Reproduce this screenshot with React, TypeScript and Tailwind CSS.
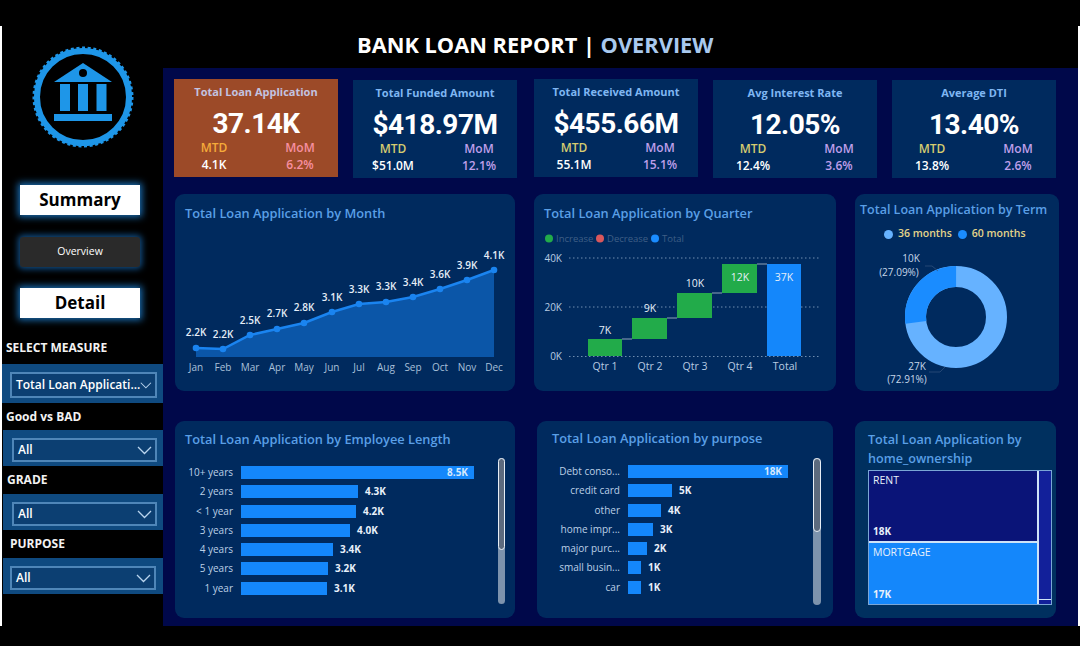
import React from "react";

const kpis = [
  { title: "Total Loan Application", value: "37.14K", mtd: "4.1K", mom: "6.2%", cls: "mt-0 ml-0 bg-[#9c4a28]", titleCls: "text-[#c3c3e0]", mtdCls: "text-[#f5aa3a]", momCls: "text-[#f78fa0]" },
  { title: "Total Funded Amount", value: "$418.97M", mtd: "$51.0M", mom: "12.1%", cls: "mt-[1px] ml-[15px] bg-[#002a5e]", titleCls: "text-[#7fb6f2]", mtdCls: "text-[#d6cc70]", momCls: "text-[#bf9fea]" },
  { title: "Total Received Amount", value: "$455.66M", mtd: "55.1M", mom: "15.1%", cls: "mt-0 ml-[17px] bg-[#002a5e]", titleCls: "text-[#7fb6f2]", mtdCls: "text-[#d6cc70]", momCls: "text-[#bf9fea]" },
  { title: "Avg Interest Rate", value: "12.05%", mtd: "12.4%", mom: "3.6%", cls: "mt-[1px] ml-[15px] bg-[#002a5e]", titleCls: "text-[#7fb6f2]", mtdCls: "text-[#d6cc70]", momCls: "text-[#bf9fea]" },
  { title: "Average DTI", value: "13.40%", mtd: "13.8%", mom: "2.6%", cls: "mt-[1px] ml-[15px] bg-[#002a5e]", titleCls: "text-[#7fb6f2]", mtdCls: "text-[#d6cc70]", momCls: "text-[#bf9fea]" },
];

const months = [
  ["Jan", 196, 348, "2.2K", 332],
  ["Feb", 223, 349, "2.2K", 334],
  ["Mar", 250, 335, "2.5K", 320],
  ["Apr", 277, 329, "2.7K", 313],
  ["May", 304, 323, "2.8K", 307],
  ["Jun", 332, 312, "3.1K", 297],
  ["Jul", 359, 304, "3.3K", 289],
  ["Aug", 386, 302, "3.3K", 286],
  ["Sep", 413, 297, "3.4K", 282],
  ["Oct", 440, 289, "3.6K", 274],
  ["Nov", 467, 280, "3.9K", 265],
  ["Dec", 494, 270, "4.1K", 255],
] as const;

const employee = [
  ["10+ years", 233, "8.5K"],
  ["2 years", 117, "4.3K"],
  ["< 1 year", 115, "4.2K"],
  ["3 years", 109, "4.0K"],
  ["4 years", 92, "3.4K"],
  ["5 years", 87, "3.2K"],
  ["1 year", 86, "3.1K"],
] as const;

const purpose = [
  ["Debt conso...", 160, "18K"],
  ["credit card", 44, "5K"],
  ["other", 33, "4K"],
  ["home impr...", 25, "3K"],
  ["major purc...", 19, "2K"],
  ["small busin...", 13, "1K"],
  ["car", 13, "1K"],
] as const;

function Slicer({ label, value, labelCls, boxCls, innerCls }: { label: string; value: string; labelCls: string; boxCls: string; innerCls: string }) {
  return (
    <div>
      <div className={`text-[12px] leading-[16px] font-bold text-[#f2f2f2] ${labelCls}`}>{label}</div>
      <div className={`bg-[#0f4a80] ${boxCls}`}>
        <div className={`flex items-center justify-between border-2 border-[#4f86b8] bg-[#0c3f72] pl-[4px] pr-[3px] ${innerCls}`}>
          <span className="text-[12px] font-semibold text-white whitespace-nowrap">{value}</span>
          <svg width="15" height="9" viewBox="0 0 15 9" fill="none" stroke="#b9d4ee" strokeWidth="1.3">
            <polyline points="1,1 7.5,7.5 14,1" />
          </svg>
        </div>
      </div>
    </div>
  );
}

function Bars({ rows, labelCls, barMax }: { rows: readonly (readonly [string, number, string])[]; labelCls: string; barMax: number }) {
  return (
    <div className="flex flex-1 flex-col gap-[6.3px]">
      {rows.map(([label, width, value]) => (
        <div key={label} className="flex h-[13px] items-center">
          <div className={`text-right text-[10px] whitespace-nowrap text-[#bcd0e6] ${labelCls}`}>{label}</div>
          <div className="ml-[8px] flex h-[13px] items-center justify-end bg-[#1487fb] pr-[6px]" style={{ width }}>
            {width === barMax && <span className="text-[10px] font-bold text-[#d5e8fb]">{value}</span>}
          </div>
          {width !== barMax && <span className="ml-[7px] text-[10px] font-bold text-[#e8f0fa]">{value}</span>}
        </div>
      ))}
    </div>
  );
}

function Scrollbar({ thumbCls, boxCls }: { thumbCls: string; boxCls: string }) {
  return (
    <div className={`rounded-[4px] bg-[#7d93ad] ${boxCls}`}>
      <div className={`rounded-[4px] border border-[#e6edf5] bg-[#5c6a7e] ${thumbCls}`} />
    </div>
  );
}

function CardTitle({ children, cls }: { children: React.ReactNode; cls: string }) {
  return <div className={`font-semibold leading-[19px] text-[#5a9fe6] ${cls}`}>{children}</div>;
}

export default function App() {
  return (
    <div className="h-[646px] w-[1080px] overflow-hidden bg-black font-['Open_Sans',sans-serif]">
      <div className="flex h-[626px] pt-[26px]">
        <div className="flex h-[600px] w-full border-x-2 border-white">
          {/* Sidebar */}
          <aside className="w-[161px] shrink-0">
            <svg className="ml-[26px] mt-[16px] block" width="110" height="110" viewBox="0 0 110 110">
              <circle cx="55" cy="55" r="46" fill="none" stroke="#1e96e8" strokeWidth="6" />
              <circle cx="55" cy="55" r="49" fill="none" stroke="#1e96e8" strokeWidth="3" strokeDasharray="3 2.6" />
              <path d="M26 40 L55 21 L84 40 Z" fill="#1e96e8" />
              <circle cx="55" cy="31" r="4" fill="#000" />
              <rect x="32" y="42" width="10" height="27" fill="#1e96e8" />
              <rect x="50" y="42" width="10" height="27" fill="#1e96e8" />
              <rect x="68.500" y="42" width="10" height="27" fill="#1e96e8" />
              <rect x="26" y="72" width="58" height="7" fill="#1e96e8" />
            </svg>
            <div className="ml-[18px] mt-[33px] flex h-[30px] w-[120px] items-center justify-center bg-white text-[17px] font-bold text-black shadow-[0_0_7px_2px_#1a6fb5]">Summary</div>
            <div className="ml-[18px] mt-[22px] flex h-[30px] w-[120px] items-center justify-center rounded-[3px] bg-[#2a2a2a] text-[10.500px] text-white shadow-[0_0_6px_2px_#124f86]">Overview</div>
            <div className="ml-[18px] mt-[21px] flex h-[30px] w-[120px] items-center justify-center bg-white text-[17px] font-bold text-black shadow-[0_0_7px_2px_#1a6fb5]">Detail</div>
            <div className="mt-[22px] flex flex-col">
              <Slicer label="SELECT MEASURE" value="Total Loan Applicati..." labelCls="ml-[4px] mb-[8px]" boxCls="h-[39px] pl-[8px] pr-[6px] pt-[8px]" innerCls="h-[26px]" />
              <div className="mt-[6px]">
                <Slicer label="Good vs BAD" value="All" labelCls="ml-[4px] mb-[5px]" boxCls="ml-[1px] h-[36px] pl-[9px] pr-[6px] pt-[8px]" innerCls="h-[24px]" />
              </div>
              <div className="mt-[6px]">
                <Slicer label="GRADE" value="All" labelCls="ml-[5px] mb-[6px]" boxCls="ml-[1px] h-[36px] pl-[9px] pr-[6px] pt-[8px]" innerCls="h-[24px]" />
              </div>
              <div className="mt-[6px]">
                <Slicer label="PURPOSE" value="All" labelCls="ml-[8px] mb-[6px]" boxCls="ml-[1px] h-[36px] pl-[7px] pr-[7px] pt-[8px]" innerCls="h-[24px]" />
              </div>
            </div>
          </aside>

          {/* Main */}
          <main className="flex min-w-0 flex-1 flex-col">
            <div className="flex h-[42px] items-center pb-[4px] pl-[194px] text-[21.800px] font-bold whitespace-nowrap text-white">
              BANK LOAN REPORT&nbsp;|&nbsp;<span className="text-[#a9c9ee]">OVERVIEW</span>
            </div>
            <div className="flex-1 bg-[#00084a] pl-[11px] pt-[11px]">
              {/* KPI row */}
              <div className="flex h-[99px] items-start">
                {kpis.map((k) => (
                  <div key={k.title} className={`h-[98px] w-[164px] shrink-0 pt-[5px] ${k.cls}`}>
                    <div className={`text-center text-[11px] font-bold leading-[16px] ${k.titleCls}`}>{k.title}</div>
                    <div className="mt-[7px] text-center font-['Roboto',sans-serif] text-[28px] font-bold leading-[34px] tracking-[-0.5px] text-white">{k.value}</div>
                    <div className="-mt-[2px] flex pl-[10px] text-center text-[12px] leading-[17px]">
                      <div className="w-[60px]">
                        <div className={`font-semibold ${k.mtdCls}`}>MTD</div>
                        <div className="font-semibold text-white">{k.mtd}</div>
                      </div>
                      <div className="ml-[26px] w-[60px]">
                        <div className={`font-semibold ${k.momCls}`}>MoM</div>
                        <div className={`font-semibold ${k.momCls}`}>{k.mom}</div>
                      </div>
                    </div>
                  </div>
                ))}
              </div>

              {/* Chart row 1 */}
              <div className="mt-[16px] flex">
                <section className="ml-[1px] h-[197px] w-[340px] rounded-[9px] bg-[#002a5e]">
                  <CardTitle cls="text-[12.800px] pl-[10px] pt-[10px] h-[40px]">Total Loan Application by Month</CardTitle>
                  <svg className="block" width="340" height="157" viewBox="175 234 340 157">
                    <path d={`M196 357 L${months.map((m) => `${m[1]} ${m[2]}`).join(" L")} L494 357 Z`} fill="#0b56a8" />
                    <polyline points={months.map((m) => `${m[1]},${m[2]}`).join(" ")} fill="none" stroke="#1a84f0" strokeWidth="2.500" />
                    {months.map((m) => (
                      <g key={m[0]}>
                        <circle cx={m[1]} cy={m[2]} r="3.300" fill="#1a84f0" />
                        <text x={m[1]} y={m[4] + 3.500} textAnchor="middle" fontSize="10" fontWeight="600" fill="#e6eef8">{m[3]}</text>
                        <text x={m[1]} y="370.500" textAnchor="middle" fontSize="10" fill="#a9c0da">{m[0]}</text>
                      </g>
                    ))}
                  </svg>
                </section>

                <section className="ml-[19px] h-[197px] w-[302px] rounded-[9px] bg-[#002a5e]">
                  <CardTitle cls="text-[12.800px] pl-[10px] pt-[10px] h-[34px]">Total Loan Application by Quarter</CardTitle>
                  <svg className="block" width="302" height="163" viewBox="534 228 302 163">
                    <circle cx="549" cy="238.500" r="4" fill="#22ab4a" />
                    <text x="556" y="242" fontSize="9.500" fill="#3f5f86">Increase</text>
                    <circle cx="600" cy="238.500" r="4" fill="#d9575c" />
                    <text x="607" y="242" fontSize="9.500" fill="#3f5f86">Decrease</text>
                    <circle cx="655" cy="238.500" r="4" fill="#1a8cff" />
                    <text x="662" y="242" fontSize="9.500" fill="#3f5f86">Total</text>
                    <g stroke="#6f8db0" strokeWidth="1" strokeDasharray="1.500 2.500">
                      <line x1="569" y1="258" x2="820" y2="258" />
                      <line x1="569" y1="307" x2="820" y2="307" />
                      <line x1="569" y1="356.500" x2="820" y2="356.500" />
                    </g>
                    <g fontSize="10" fill="#b9cce2" textAnchor="end">
                      <text x="562" y="261.500">40K</text>
                      <text x="562" y="310.500">20K</text>
                      <text x="562" y="360">0K</text>
                    </g>
                    <g stroke="#8fa3b8" strokeWidth="1">
                      <line x1="622" y1="339" x2="632" y2="339" />
                      <line x1="667" y1="318" x2="677" y2="318" />
                      <line x1="712" y1="293" x2="722" y2="293" />
                      <line x1="757" y1="264" x2="767" y2="264" />
                    </g>
                    <rect x="588" y="339" width="34" height="17" fill="#22ab4a" />
                    <rect x="632" y="318" width="35" height="21" fill="#22ab4a" />
                    <rect x="677" y="293" width="35" height="25" fill="#22ab4a" />
                    <rect x="722" y="264" width="35" height="29" fill="#22ab4a" />
                    <rect x="767" y="264" width="34" height="92" fill="#1487fb" />
                    <g fontSize="10.500" fill="#e6eef8" textAnchor="middle">
                      <text x="605" y="333.500">7K</text>
                      <text x="650" y="311.500">9K</text>
                      <text x="695" y="287">10K</text>
                      <text x="740" y="281">12K</text>
                      <text x="784" y="281">37K</text>
                    </g>
                    <g fontSize="10.500" fill="#b9cce2" textAnchor="middle">
                      <text x="605" y="370">Qtr 1</text>
                      <text x="650" y="370">Qtr 2</text>
                      <text x="695" y="370">Qtr 3</text>
                      <text x="740" y="370">Qtr 4</text>
                      <text x="785" y="370">Total</text>
                    </g>
                  </svg>
                </section>

                <section className="ml-[19px] h-[197px] w-[204px] rounded-[9px] bg-[#002a5e]">
                  <CardTitle cls="text-[12.500px] pl-[5px] pt-[6px] h-[31px]">Total Loan Application by Term</CardTitle>
                  <div className="flex h-[18px] items-center pl-[29px] text-[10.500px] font-semibold text-[#e3d48a]">
                    <span className="mr-[5px] h-[9px] w-[9px] rounded-full bg-[#66b2ff]" />
                    36 months
                    <span className="ml-[6px] mr-[5px] h-[9px] w-[9px] rounded-full bg-[#1a8cff]" />
                    60 months
                  </div>
                  <svg className="block" width="204" height="148" viewBox="855 243 204 148">
                    <circle cx="956" cy="317" r="40.500" fill="none" stroke="#66b2ff" strokeWidth="21" />
                    <circle cx="956" cy="317" r="40.500" fill="none" stroke="#1a8cff" strokeWidth="21" strokeDasharray="68.940 254.470" transform="rotate(-187.500 956 317)" />
                    <path d="M925 266 L932 266 L938 271" fill="none" stroke="#33557f" strokeWidth="0.700" />
                    <path d="M929 372 L940 372 L945 367" fill="none" stroke="#33557f" strokeWidth="0.700" />
                    <g fontSize="10" fill="#c6d6e8" textAnchor="middle">
                      <text x="911" y="261.500">10K</text>
                      <text x="899" y="275.500">(27.09%)</text>
                      <text x="917" y="369.500">27K</text>
                      <text x="907" y="382.500">(72.91%)</text>
                    </g>
                  </svg>
                </section>
              </div>

              {/* Chart row 2 */}
              <div className="mt-[30px] flex">
                <section className="ml-[1px] h-[197px] w-[340px] rounded-[9px] bg-[#002a5e]">
                  <CardTitle cls="text-[12.800px] pl-[10px] pt-[9px] h-[37px]">Total Loan Application by Employee Length</CardTitle>
                  <div className="flex pt-[8px]">
                    <Bars rows={employee} labelCls="w-[58px]" barMax={233} />
                    <Scrollbar boxCls="mr-[10px] -mt-[8px] h-[146px] w-[7px]" thumbCls="h-[92px]" />
                  </div>
                </section>

                <section className="ml-[22px] h-[197px] w-[296px] rounded-[9px] bg-[#002a5e]">
                  <CardTitle cls="text-[12.800px] pl-[15px] pt-[8px] h-[37px]">Total Loan Application by purpose</CardTitle>
                  <div className="flex pt-[7px]">
                    <Bars rows={purpose} labelCls="w-[83px]" barMax={160} />
                    <Scrollbar boxCls="mr-[12px] -mt-[7px] h-[147px] w-[8px]" thumbCls="h-[74px]" />
                  </div>
                </section>

                <section className="ml-[22px] h-[197px] w-[201px] rounded-[9px] bg-[#00305f] pl-[13px] pt-[9px]">
                  <CardTitle cls="text-[12.600px]">Total Loan Application by home_ownership</CardTitle>
                  <div className="mt-[2px] flex h-[135px] w-[184px] border border-[#7ba6d6] text-[10.500px] text-[#e8f0fa]">
                    <div className="flex w-[170px] flex-col border-r-2 border-[#cfe3f7]">
                      <div className="flex h-[70px] flex-col justify-between bg-[#0a1478] px-[4px] py-[2px]">
                        <span>RENT</span>
                        <span className="text-[10px] font-bold">18K</span>
                      </div>
                      <div className="flex flex-1 flex-col justify-between border-t-2 border-[#cfe3f7] bg-[#1487fb] px-[4px] py-[2px]">
                        <span>MORTGAGE</span>
                        <span className="text-[10px] font-bold">17K</span>
                      </div>
                    </div>
                    <div className="flex flex-1 flex-col bg-[#12209a]">
                      <div className="flex-1" />
                      <div className="h-[5px] border-t border-[#cfe3f7]" />
                    </div>
                  </div>
                </section>
              </div>
            </div>
          </main>
        </div>
      </div>
    </div>
  );
}
